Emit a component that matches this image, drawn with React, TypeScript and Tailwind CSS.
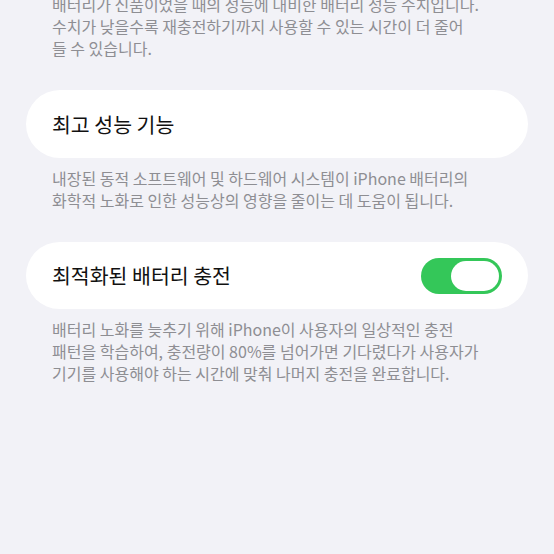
export default function App() {
  const font = "font-['Noto_Sans_CJK_KR','Noto_Sans',sans-serif]"
  return (
    <div className={`w-[554px] h-[554px] overflow-hidden bg-[#f2f2f7] ${font}`}>
      <div className="px-[26px]">
        {/* Battery capacity footer (cut off at top) */}
        <p className="mt-[-7px] px-[26px] text-[16px] leading-[22px] text-[#8e8e93] whitespace-nowrap">
          배터리가 신품이었을 때의 성능에 대비한 배터리 성능 수치입니다.
          <br />
          수치가 낮을수록 재충전하기까지 사용할 수 있는 시간이 더 줄어
          <br />
          들 수 있습니다.
        </p>

        {/* Peak performance */}
        <div className="mt-[31px] h-[68px] rounded-full bg-white px-[26px] flex items-center">
          <span className="text-[20.5px] text-[#111]">최고 성능 기능</span>
        </div>
        <p className="mt-[9px] px-[26px] text-[16px] leading-[22px] text-[#8e8e93] whitespace-nowrap">
          내장된 동적 소프트웨어 및 하드웨어 시스템이 iPhone 배터리의
          <br />
          화학적 노화로 인한 성능상의 영향을 줄이는 데 도움이 됩니다.
        </p>

        {/* Optimized charging */}
        <div className="mt-[31px] h-[67px] rounded-full bg-white px-[26px] flex items-center justify-between">
          <span className="text-[20.5px] text-[#111]">최적화된 배터리 충전</span>
          <div className="w-[81px] h-[36px] rounded-full bg-[#34c759] p-[3px] flex justify-end">
            <div className="w-[48px] h-[30px] rounded-full bg-white" />
          </div>
        </div>
        <p className="mt-[9px] px-[26px] text-[16px] leading-[22px] text-[#8e8e93] whitespace-nowrap">
          배터리 노화를 늦추기 위해 iPhone이 사용자의 일상적인 충전
          <br />
          패턴을 학습하여, 충전량이 80%를 넘어가면 기다렸다가 사용자가
          <br />
          기기를 사용해야 하는 시간에 맞춰 나머지 충전을 완료합니다.
        </p>
      </div>
    </div>
  )
}
